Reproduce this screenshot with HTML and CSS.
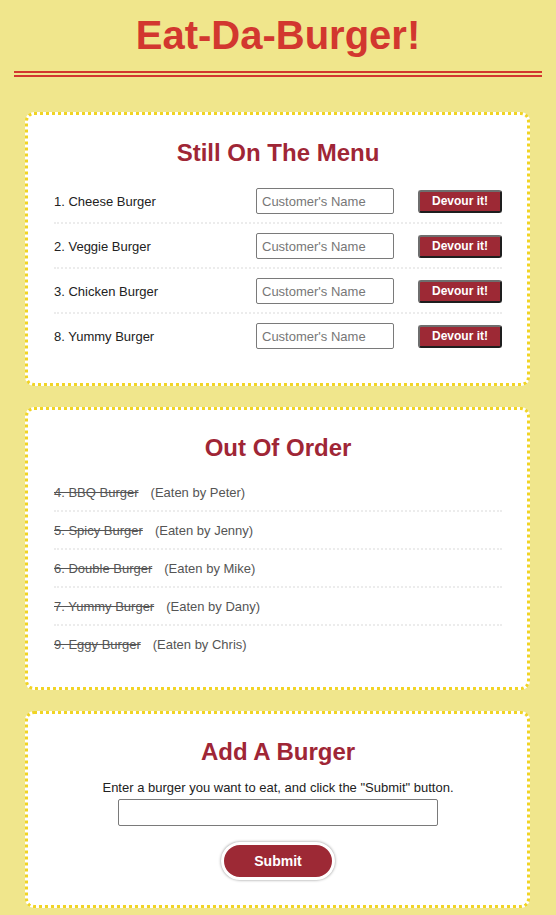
FILE: index.html
```html
<!DOCTYPE html>
<html lang="en">
<head>
<meta charset="utf-8">
<title>Eat-Da-Burger!</title>
<link rel="stylesheet" href="styles.css">
</head>
<body>
<header class="header">
  <h1 class="brand">Eat-Da-Burger!</h1>
</header>
<main class="content">
  <section class="panel panel-menu">
    <h2 class="panel-title">Still On The Menu</h2>
    <ul class="list">
      <li class="menu-row">
        <span class="burger-name">1. Cheese Burger</span>
        <input class="name-input" type="text" placeholder="Customer's Name">
        <button class="devour-btn" type="button">Devour it!</button>
      </li>
      <li class="menu-row">
        <span class="burger-name">2. Veggie Burger</span>
        <input class="name-input" type="text" placeholder="Customer's Name">
        <button class="devour-btn" type="button">Devour it!</button>
      </li>
      <li class="menu-row">
        <span class="burger-name">3. Chicken Burger</span>
        <input class="name-input" type="text" placeholder="Customer's Name">
        <button class="devour-btn" type="button">Devour it!</button>
      </li>
      <li class="menu-row">
        <span class="burger-name">8. Yummy Burger</span>
        <input class="name-input" type="text" placeholder="Customer's Name">
        <button class="devour-btn" type="button">Devour it!</button>
      </li>
    </ul>
  </section>

  <section class="panel panel-eaten">
    <h2 class="panel-title">Out Of Order</h2>
    <ul class="list">
      <li class="eaten-row"><span class="eaten-name">4. BBQ Burger</span><span class="eaten-by">(Eaten by Peter)</span></li>
      <li class="eaten-row"><span class="eaten-name">5. Spicy Burger</span><span class="eaten-by">(Eaten by Jenny)</span></li>
      <li class="eaten-row"><span class="eaten-name">6. Double Burger</span><span class="eaten-by">(Eaten by Mike)</span></li>
      <li class="eaten-row"><span class="eaten-name">7. Yummy Burger</span><span class="eaten-by">(Eaten by Dany)</span></li>
      <li class="eaten-row"><span class="eaten-name">9. Eggy Burger</span><span class="eaten-by">(Eaten by Chris)</span></li>
    </ul>
  </section>

  <section class="panel panel-add">
    <h2 class="panel-title">Add A Burger</h2>
    <form class="add-form">
      <label class="add-label" for="burger">Enter a burger you want to eat, and click the "Submit" button.</label>
      <input class="add-input" id="burger" type="text">
      <button class="submit-btn" type="button">Submit</button>
    </form>
  </section>
</main>
</body>
</html>
```

FILE: styles.css
```css
* {
  box-sizing: border-box;
}

html, body {
  margin: 0;
  padding: 0;
}

body {
  background: #f0e68c;
  font-family: "Liberation Sans", Arial, Helvetica, sans-serif;
  font-size: 13px;
  color: #333;
}

.header {
  margin: 0 14px;
  padding-top: 12px;
  padding-bottom: 13px;
  border-bottom: 6px double #d2372f;
}

.brand {
  margin: 0;
  text-align: center;
  font-size: 40px;
  line-height: 46px;
  font-weight: bold;
  color: #d2372f;
}

.content {
  margin: 35px 26px 0 25px;
  display: flex;
  flex-direction: column;
  gap: 21px;
}

.panel {
  background: #fff;
  border: 3px dotted #f1d424;
  border-radius: 9px;
  padding: 24px 25px 24px 26px;
}

.panel-menu {
  padding-bottom: 26px;
}

.panel-eaten {
  padding-bottom: 25px;
}

.panel-title {
  margin: 0 0 12px;
  text-align: center;
  font-size: 24px;
  line-height: 28px;
  font-weight: bold;
  color: #9f2636;
}

.list {
  list-style: none;
  margin: 0;
  padding: 0;
}

.menu-row {
  display: flex;
  align-items: center;
  padding: 9px 0 8px;
  border-bottom: 2px dotted #ececec;
}

.menu-row:last-child,
.eaten-row:last-child {
  border-bottom: none;
}

.burger-name {
  flex: 1;
  color: #222;
  line-height: 15px;
}

.name-input {
  width: 138px;
  height: 26px;
  margin: 0;
  padding: 0 5px;
  border: 1px solid #7a7a7a;
  border-radius: 2px;
  font-family: inherit;
  font-size: 13px;
  color: #333;
  background: #fff;
}

.name-input::placeholder {
  color: #777;
}

.devour-btn {
  width: 84px;
  height: 23px;
  margin: 0 0 0 24px;
  padding: 0;
  background: #9d2935;
  color: #fff;
  font-family: inherit;
  font-size: 12px;
  font-weight: bold;
  border: 2px solid;
  border-color: #6e6e6e #1e1e1e #1e1e1e #6e6e6e;
  border-radius: 3px;
}

.eaten-row {
  padding: 11px 0 10px;
  line-height: 15px;
  border-bottom: 2px dotted #ececec;
  color: #555;
}

.eaten-name {
  text-decoration: line-through;
  color: #555;
}

.eaten-by {
  margin-left: 12px;
}

.panel-add {
  padding-bottom: 25px;
}

.panel-add .panel-title {
  margin-bottom: 14px;
}

.add-form {
  display: flex;
  flex-direction: column;
  align-items: center;
}

.add-label {
  line-height: 15px;
  color: #222;
}

.add-input {
  width: 320px;
  height: 27px;
  margin-top: 4px;
  border: 1px solid #7a7a7a;
  border-radius: 2px;
  padding: 0 5px;
  font-family: inherit;
  font-size: 13px;
  background: #fff;
}

.submit-btn {
  width: 114px;
  height: 38px;
  margin-top: 16px;
  background: #9d2935;
  color: #fff;
  font-family: inherit;
  font-size: 14px;
  font-weight: bold;
  border: 3px solid #fff;
  border-radius: 19px;
  box-shadow: 0 0 3px rgba(0, 0, 0, 0.45);
}
```
